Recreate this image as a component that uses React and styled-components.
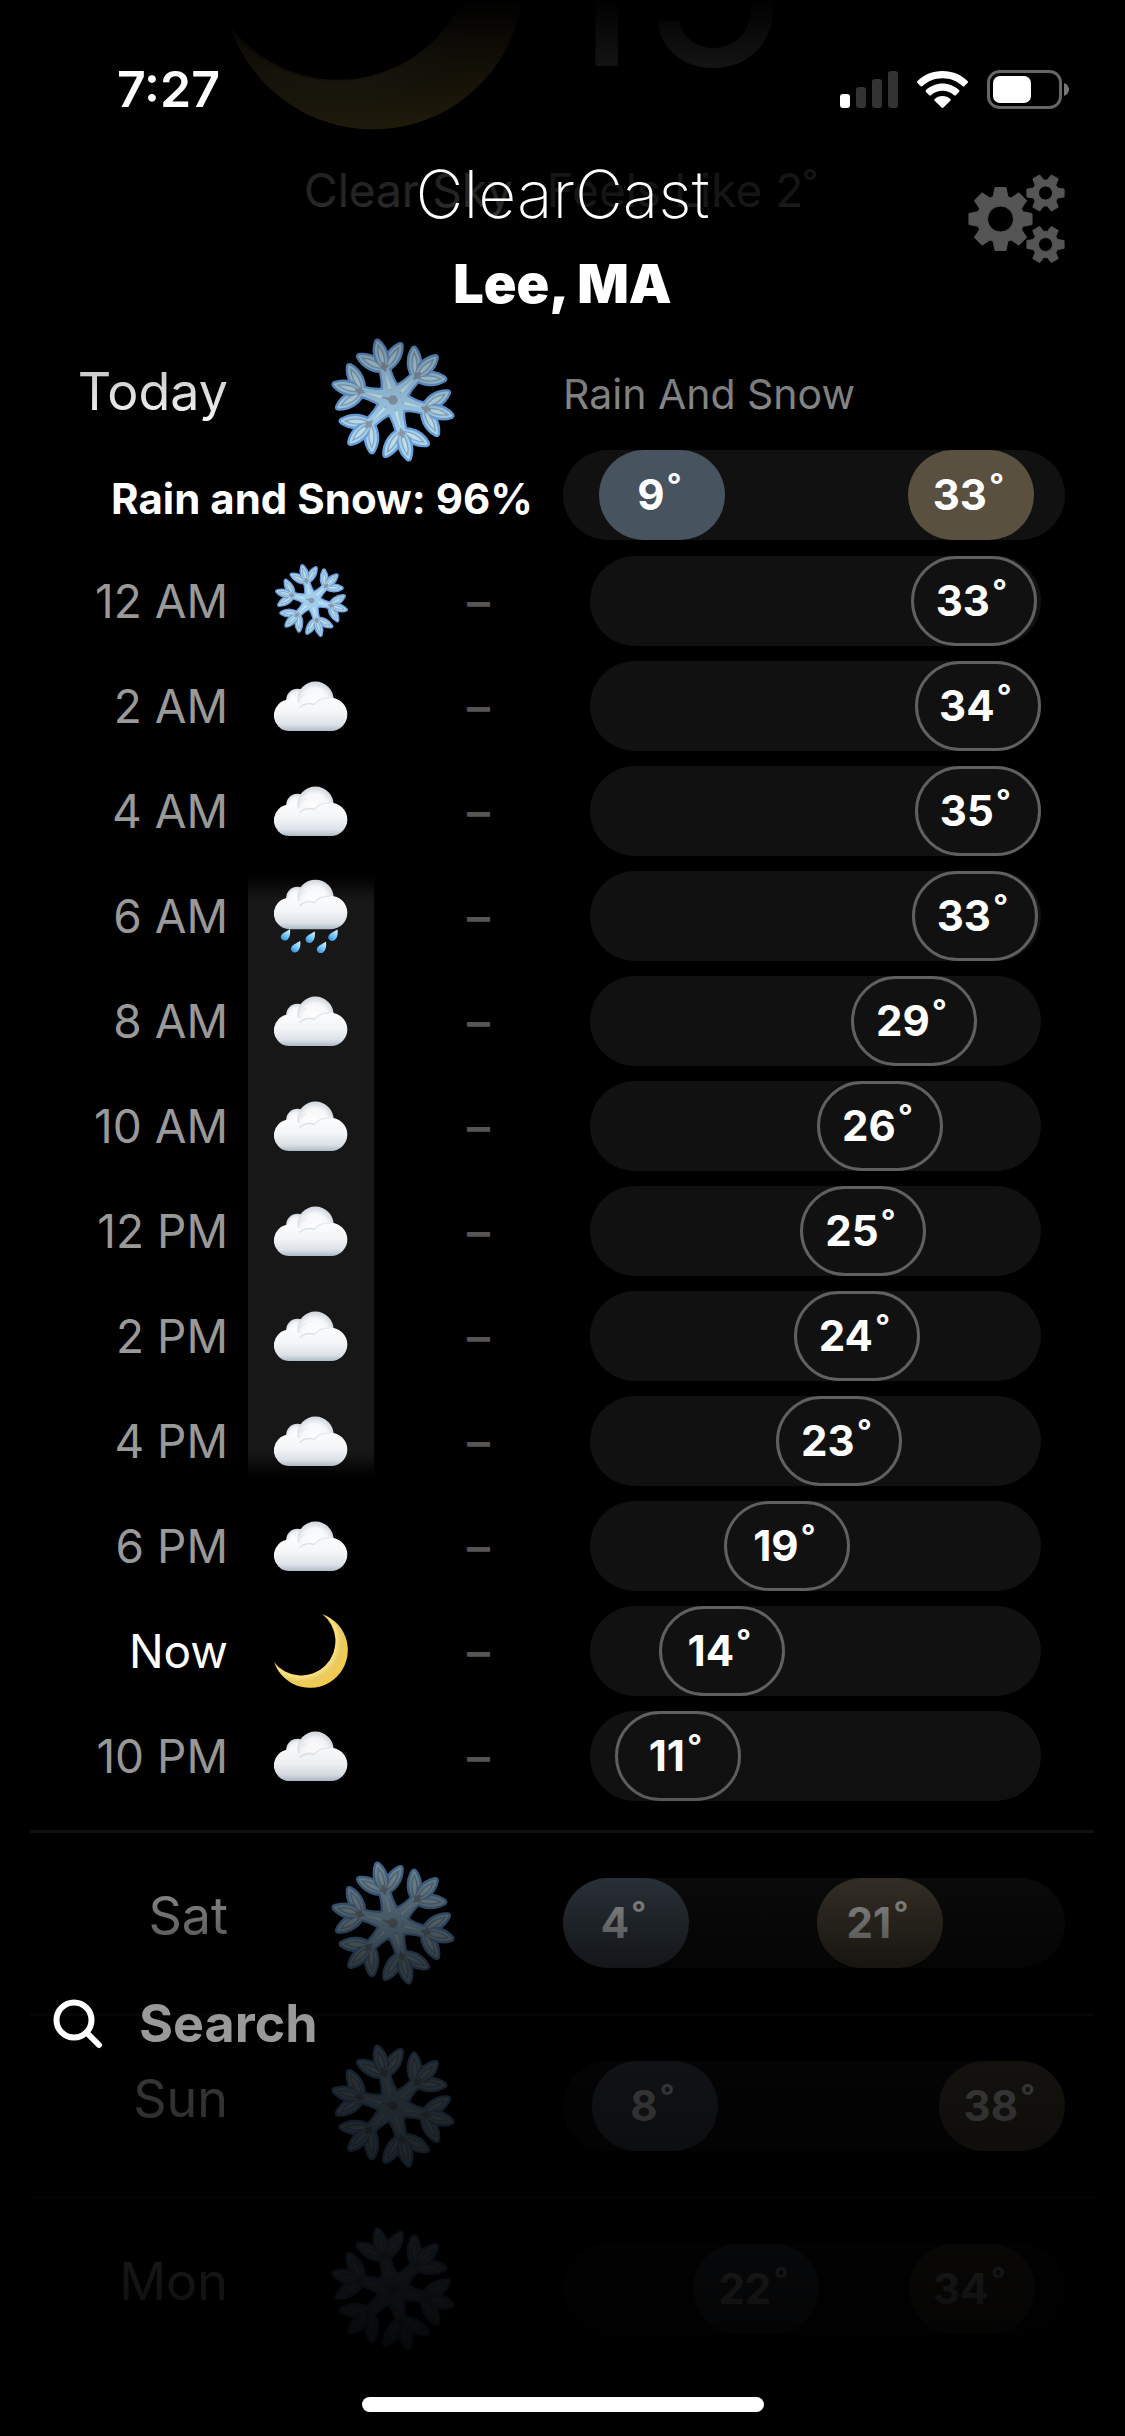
import React, { useId } from "react";
import styled, { createGlobalStyle } from "styled-components";

const GlobalStyle = createGlobalStyle`
  *, *::before, *::after { box-sizing: border-box; }
  body {
    margin: 0;
    background: #000;
    color: #fff;
    font-family: Inter, Roboto, "Liberation Sans", sans-serif;
  }
`;

const Screen = styled.main`
  position: relative;
  height: 100vh;
  overflow: hidden;
  background: #000;
`;

/* ---------- scrolled forecast ---------- */

const Forecast = styled.div`
  display: flex;
  flex-direction: column;
`;

const Hero = styled.section`
  display: flex;
  align-items: flex-end;
  justify-content: center;
  gap: 16px;
  height: 130px;
  padding-right: 75px;
  svg { flex: none; }
`;

const HeroTemp = styled.span`
  width: 280px;
  padding-bottom: 52px;
  font-size: 244px;
  font-weight: 400;
  line-height: 200px;
  white-space: nowrap;
`;

const HeroSummary = styled.p`
  display: flex;
  justify-content: center;
  gap: 34px;
  margin: 0;
  padding: 30px 4px 118px 0;
  font-size: 46px;
  line-height: 60px;
`;

const Secondary = styled.span`
  color: #999;
`;

const DayGrid = styled.div`
  display: grid;
  grid-template-columns: 228fr 335fr 502fr;
  grid-template-rows: ${(p) => (p.$expanded ? "112px 90px" : "180px")};
  align-items: ${(p) => (p.$expanded ? "start" : "center")};
  padding-right: 60px;
`;

const DayLabel = styled.h2`
  margin: 0;
  padding-bottom: ${(p) => (p.$expanded ? "0" : "14px")};
  font-size: 52px;
  font-weight: 400;
  line-height: ${(p) => (p.$expanded ? "108px" : "60px")};
  text-align: right;
`;

const IconCell = styled.div`
  display: flex;
  align-items: center;
  justify-content: center;
  height: 124px;
  padding-right: 6px;
  svg { flex: none; }
`;

const Condition = styled.p`
  margin: 0;
  font-size: 41px;
  line-height: 112px;
  color: #939393;
`;

const Chance = styled.p`
  grid-column: span 2;
  margin: 0;
  padding: 4px 30px 0 0;
  font-size: 42px;
  font-weight: 700;
  line-height: 90px;
  text-align: right;
  white-space: nowrap;
`;

const Track = styled.div`
  display: flex;
  height: 90px;
  border-radius: 45px;
  background: #111;
`;

const Spacer = styled.span`
  flex: ${(p) => p.$grow} 0 0;
`;

const pillLook = {
  low: "background: #47535f;",
  high: "background: #595040;",
  hour: "border: 3px solid #606060;",
};

const Pill = styled.span`
  flex: none;
  display: flex;
  align-items: center;
  justify-content: center;
  gap: 2px;
  width: 126px;
  height: 90px;
  padding: 0 5px 0 0;
  border-radius: 45px;
  font-size: 42px;
  font-weight: 700;
  line-height: 50px;
  ${(p) => pillLook[p.$kind]}
`;

const Degree = styled.span`
  padding-bottom: 4px;
`;

const HourList = styled.ul`
  list-style: none;
  margin: 8px 0 22px;
  padding: 0;
`;

const HourRow = styled.li`
  display: grid;
  grid-template-columns: 248fr 126fr 209fr 458fr;
  align-items: center;
  height: 105px;
  padding-right: 84px;
`;

const HourTime = styled.span`
  padding-right: 20px;
  font-size: 46px;
  line-height: 60px;
  text-align: right;
  white-space: nowrap;
  color: ${(p) => (p.$now ? "#fff" : "#999")};
`;

const daylight = {
  none: "none",
  start: "linear-gradient(transparent 13px, #171717 36px)",
  full: "#171717",
  end: "linear-gradient(#171717 65px, transparent 88px)",
};

const HourIcon = styled.span`
  display: flex;
  align-items: center;
  justify-content: center;
  height: 105px;
  background: ${(p) => daylight[p.$daylight]};
`;

const Precip = styled.span`
  font-size: 46px;
  line-height: 60px;
  font-weight: 600;
  text-align: center;
  color: #555;
`;

const HourTrack = styled.div`
  padding-left: 7px;
`;

const Divider = styled.hr`
  width: calc(100% - 61px);
  height: 3px;
  margin: 0 31px 0 30px;
  border: 0;
  background: #161616;
`;

/* ---------- bars over the forecast ---------- */

const TopBar = styled.header`
  position: absolute;
  inset: 0 0 auto 0;
  height: 430px;
  background: linear-gradient(
    rgba(0, 0, 0, 1) 0,
    rgba(0, 0, 0, 0.93) 60px,
    rgba(0, 0, 0, 0.88) 120px,
    rgba(0, 0, 0, 0.86) 200px,
    rgba(0, 0, 0, 0.5) 290px,
    rgba(0, 0, 0, 0.2) 373px,
    rgba(0, 0, 0, 0.07) 411px,
    rgba(0, 0, 0, 0) 430px
  );
`;

const StatusBar = styled.div`
  display: flex;
  align-items: center;
  justify-content: space-between;
  height: 154px;
  padding: 24px 56px 0 117px;
`;

const Clock = styled.time`
  font-size: 50px;
  font-weight: 600;
  line-height: 60px;
`;

const StatusIcons = styled.div`
  display: flex;
  align-items: center;
  gap: 19px;
`;

const TitleRow = styled.div`
  display: grid;
  grid-template-columns: 1fr auto 1fr;
  align-items: start;
`;

const Titles = styled.div`
  grid-column: 2;
  text-align: center;
`;

const AppName = styled.h1`
  margin: 0;
  font-size: 66px;
  font-weight: 200;
  line-height: 80px;
`;

const Place = styled.p`
  margin: 0;
  font-size: 54px;
  font-weight: 900;
  line-height: 100px;
`;

const SettingsButton = styled.button`
  justify-self: end;
  display: flex;
  margin: 20px 59px 0 0;
  padding: 0;
  border: 0;
  background: none;
  color: #555;
`;

const BottomBar = styled.footer`
  position: absolute;
  inset: auto 0 0 0;
  height: 716px;
  display: flex;
  flex-direction: column;
  justify-content: space-between;
  padding: 264px 0 24px;
  background: linear-gradient(
    rgba(0, 0, 0, 0) 0,
    rgba(0, 0, 0, 0.04) 70px,
    rgba(0, 0, 0, 0.43) 158px,
    rgba(0, 0, 0, 0.73) 245px,
    rgba(0, 0, 0, 0.78) 341px,
    rgba(0, 0, 0, 0.83) 430px,
    rgba(0, 0, 0, 0.9) 524px,
    rgba(0, 0, 0, 0.95) 610px,
    rgba(0, 0, 0, 1) 700px
  );
`;

const SearchForm = styled.form`
  display: flex;
  align-items: center;
  gap: 34px;
  height: 80px;
  padding: 0 52px;
`;

const SearchLabel = styled.label`
  display: flex;
`;

const SearchInput = styled.input`
  flex: 1;
  min-width: 0;
  height: 80px;
  padding: 0;
  border: 0;
  outline: 0;
  appearance: none;
  background: transparent;
  color: #fff;
  font: 700 52px/80px Inter, Roboto, "Liberation Sans", sans-serif;
  &::placeholder { color: #999; opacity: 1; }
`;

const HomeIndicator = styled.div`
  align-self: center;
  width: 402px;
  height: 15px;
  border-radius: 8px;
  background: #fff;
`;

/* ---------- drawings ---------- */

const LEAF = "M0 -86C-25 -112 -25 -152 -6 -181Q0 -188 6 -181C25 -152 25 -112 0 -86Z";
const VEIN = "M0 -100C-10 -122 -10 -146 0 -168C10 -146 10 -122 0 -100";

function Snowflake({ size }) {
  const id = useId();
  const arms = [-15, 45, 105, 165, 225, 285];
  return (
    <svg width={size} height={size} viewBox="-192 -192 384 384" role="img" aria-label="Snow">
      <defs>
        <linearGradient id={id} gradientUnits="userSpaceOnUse" x1="0" y1="-188" x2="0" y2="0">
          <stop offset="0" stopColor="#add9ee" />
          <stop offset="0.5" stopColor="#9fc9ea" />
          <stop offset="1" stopColor="#add6ea" />
        </linearGradient>
      </defs>
      {arms.map((a) => (
        <g key={a} transform={`rotate(${a})`} fill={`url(#${id})`} stroke="#6a9fdc" strokeWidth="7" strokeLinejoin="round">
          <path d="M-36 0L-27 -34Q-14 -56 -16 -108L16 -108Q14 -56 27 -34L36 0Z" />
          {[-47, 47, 0].map((r) => (
            <path key={r} d={LEAF} transform={`rotate(${r} 0 -92)`} />
          ))}
        </g>
      ))}
      {arms.map((a) => (
        <g key={a} transform={`rotate(${a})`}>
          <path d="M-28 2L-22 -32Q-11 -56 -13 -112L13 -112Q11 -56 22 -32L28 2Z" fill="#a2cdec" />
          <path d="M-4 -34L0 -92L4 -34Z" fill="#cdeef4" />
          {[-47, 0, 47].map((r) => (
            <path key={r} d={VEIN} transform={`rotate(${r} 0 -92)`} fill="#b6e0f2" stroke="#8fa4ba" strokeWidth="4" />
          ))}
          <path d="M0 -118L10 -102L0 -84L-10 -102Z" fill="#8798a8" />
          <path d="M-6 0L0 -38L6 0Z" fill="#8c9aa8" />
        </g>
      ))}
      <circle r="14" fill="#8c9aa8" />
    </svg>
  );
}

function CloudShape({ id }) {
  return (
    <>
      <defs>
        <linearGradient id={`${id}b`} gradientUnits="userSpaceOnUse" x1="0" y1="40" x2="0" y2="147">
          <stop offset="0" stopColor="#fcfdfd" />
          <stop offset="0.5" stopColor="#f3f5f7" />
          <stop offset="0.82" stopColor="#dce1e7" />
          <stop offset="1" stopColor="#aab7c4" />
        </linearGradient>
        <radialGradient id={`${id}t`} cx="0.48" cy="0.55" r="0.52">
          <stop offset="0" stopColor="#ffffff" />
          <stop offset="0.7" stopColor="#f6f7f9" />
          <stop offset="1" stopColor="#d3dae1" />
        </radialGradient>
      </defs>
      <circle cx="69" cy="54" r="33" fill={`url(#${id}t)`} />
      <circle cx="122" cy="54" r="54" fill={`url(#${id}t)`} />
      <path
        d="M46 53C58 53 66 57 74 65C88 60 108 60 122 64C134 50 150 47 166 48A49 49 0 0 1 168 146H46A46 46 0 0 1 46 53Z"
        fill={`url(#${id}b)`}
      />
      <path d="M76 76C88 64 106 62 118 68" fill="none" stroke="#dce1e7" strokeWidth="4" strokeLinecap="round" />
      <path d="M119 66C130 53 146 48 164 49" fill="none" stroke="#e2e7ec" strokeWidth="4" strokeLinecap="round" />
      <path d="M76 50C80 42 86 38 93 36" fill="none" stroke="#e6eaee" strokeWidth="4" strokeLinecap="round" />
    </>
  );
}

function Cloud() {
  const id = useId();
  return (
    <svg width="74" height="74" viewBox="0 -37 218 218" role="img" aria-label="Cloudy">
      <CloudShape id={id} />
    </svg>
  );
}

const DROPS = [[20, 145], [50, 180], [93, 152], [160, 146], [126, 182]];

function RainCloud() {
  const id = useId();
  return (
    <svg width="74" height="74" viewBox="0 -2 218 218" role="img" aria-label="Rain">
      <CloudShape id={id} />
      <defs>
        <linearGradient id={`${id}d`} x1="0.8" y1="0" x2="0.2" y2="1">
          <stop offset="0" stopColor="#d9f3ff" />
          <stop offset="0.5" stopColor="#7cc8f6" />
          <stop offset="1" stopColor="#2f8fe0" />
        </linearGradient>
      </defs>
      {DROPS.map(([x, y]) => (
        <path
          key={x}
          transform={`translate(${x} ${y})`}
          d="M27 0C29 12 27 24 20 31C12 38 1 34 0 24C0 12 18 8 27 0Z"
          fill={`url(#${id}d)`}
        />
      ))}
    </svg>
  );
}

function Moon({ size }) {
  const id = useId();
  return (
    <svg width={size} height={size} viewBox="0 0 217 217" role="img" aria-label="Clear night">
      <defs>
        <radialGradient id={id} gradientUnits="userSpaceOnUse" cx="78" cy="78" r="142">
          <stop offset="0.7" stopColor="#a86f14" />
          <stop offset="0.73" stopColor="#fbe283" />
          <stop offset="0.85" stopColor="#e9ca62" />
          <stop offset="1" stopColor="#f3cb4c" />
        </radialGradient>
      </defs>
      <path d="M140 0A111 111 0 1 1 0 140A100 100 0 1 0 140 0Z" fill={`url(#${id})`} />
    </svg>
  );
}

function gearPath(cx, cy, teeth, outer, root, hole, spread) {
  const step = (Math.PI * 2) / teeth;
  const at = (r, a) => `${(cx + r * Math.cos(a)).toFixed(2)} ${(cy + r * Math.sin(a)).toFixed(2)}`;
  const start = teeth === 8 ? -Math.PI / 2 : 0;
  const points = [];
  for (let i = 0; i < teeth; i += 1) {
    const a = start + i * step;
    points.push(at(root, a - spread * 1.45), at(outer, a - spread * 0.78), at(outer, a + spread * 0.78), at(root, a + spread * 1.45));
  }
  return `M${points.join("L")}ZM${cx - hole} ${cy}a${hole} ${hole} 0 1 0 ${hole * 2} 0a${hole} ${hole} 0 1 0 ${-hole * 2} 0Z`;
}

function Gears() {
  return (
    <svg width="98" height="90" viewBox="0 0 98 90" aria-hidden="true" fill="currentColor" stroke="currentColor" strokeWidth="1" strokeLinejoin="round" fillRule="evenodd">
      <path d={gearPath(32.5, 45, 8, 32, 23.5, 13, 0.22)} />
      <path d={gearPath(77.5, 19, 6, 19, 13, 7, 0.27)} />
      <path d={gearPath(77.5, 70.5, 6, 19, 13, 7, 0.27)} />
    </svg>
  );
}

function Signal() {
  return (
    <svg width="58" height="37" viewBox="0 0 58 37" role="img" aria-label="Signal">
      <rect x="0" y="23" width="10" height="14" rx="3" fill="#fff" />
      <rect x="16" y="16" width="10" height="21" rx="3" fill="#333" />
      <rect x="32" y="8" width="10" height="29" rx="3" fill="#333" />
      <rect x="48" y="0" width="10" height="37" rx="3" fill="#333" />
    </svg>
  );
}

function Wifi() {
  return (
    <svg width="51" height="37" viewBox="0 0 51 37" role="img" aria-label="Wi-Fi" fill="#fff">
      <path d="M25.500 0C35.500 0 44 3.600 50.500 10Q51.500 11 50.500 12L47.500 15Q46.500 16 45.500 15C40 10 33 7.300 25.500 7.300S11 10 5.500 15Q4.500 16 3.500 15L.5 12Q-.5 11 .5 10C7 3.600 15.500 0 25.500 0Z" />
      <path d="M25.500 12.500C31.500 12.500 37.500 15 42 19Q43 20 42 21L38.800 24.200Q38 25 37 24.200C34 21.500 30 19.800 25.500 19.800S17 21.500 14 24.200Q13 25 12.200 24.200L9 21Q8 20 9 19C13.500 15 19.500 12.500 25.500 12.500Z" />
      <path d="M25.500 25C28.500 25 31.300 26 33.300 27.900Q34.200 28.900 33.300 29.800L26.500 36.500Q25.500 37.400 24.500 36.500L17.700 29.800Q16.800 28.900 17.700 27.900C19.700 26 22.500 25 25.500 25Z" />
    </svg>
  );
}

function Battery() {
  return (
    <svg width="82" height="39" viewBox="0 0 82 39" role="img" aria-label="Battery">
      <rect x="1.500" y="1.500" width="72" height="36" rx="11" fill="none" stroke="#666" strokeWidth="3" />
      <rect x="6" y="6" width="38" height="27" rx="7" fill="#fff" />
      <path d="M77 13C80.500 14.500 82 17 82 19.500S80.500 24.500 77 26Z" fill="#777" />
    </svg>
  );
}

function Magnifier() {
  return (
    <svg width="53" height="50" viewBox="0 0 53 50" aria-hidden="true" fill="none" stroke="#fff" strokeLinecap="round">
      <circle cx="22" cy="21" r="17.500" strokeWidth="6" />
      <path d="M35 34L47 46" strokeWidth="6" />
    </svg>
  );
}

/* ---------- data ---------- */

const TRACK_SPAN = 376;
const HOUR_SPAN = 325;

const today = { low: 9, high: 33, lowAt: 36, highAt: 345 };

const hours = [
  { time: "12 AM", icon: "snow", temp: 33, at: 321 },
  { time: "2 AM", icon: "cloud", temp: 34, at: 325 },
  { time: "4 AM", icon: "cloud", temp: 35, at: 325 },
  { time: "6 AM", icon: "rain", temp: 33, at: 322, daylight: "start" },
  { time: "8 AM", icon: "cloud", temp: 29, at: 261, daylight: "full" },
  { time: "10 AM", icon: "cloud", temp: 26, at: 227, daylight: "full" },
  { time: "12 PM", icon: "cloud", temp: 25, at: 210, daylight: "full" },
  { time: "2 PM", icon: "cloud", temp: 24, at: 204, daylight: "full" },
  { time: "4 PM", icon: "cloud", temp: 23, at: 186, daylight: "end" },
  { time: "6 PM", icon: "cloud", temp: 19, at: 134 },
  { time: "Now", icon: "moon", temp: 14, at: 69 },
  { time: "10 PM", icon: "cloud", temp: 11, at: 25 },
];

const days = [
  { name: "Sat", low: 4, high: 21, lowAt: 0, highAt: 254 },
  { name: "Sun", low: 8, high: 38, lowAt: 29, highAt: 376 },
  { name: "Mon", low: 22, high: 34, lowAt: 130, highAt: 346 },
];

function WeatherIcon({ kind }) {
  if (kind === "snow") return <Snowflake size={77} />;
  if (kind === "rain") return <RainCloud />;
  if (kind === "moon") return <Moon size={74} />;
  return <Cloud />;
}

function Temp({ kind, value }) {
  return (
    <Pill $kind={kind}>
      {value}
      <Degree>˚</Degree>
    </Pill>
  );
}

function RangeTrack({ low, high, lowAt, highAt }) {
  return (
    <Track>
      <Spacer $grow={lowAt} />
      <Temp kind="low" value={low} />
      <Spacer $grow={highAt - lowAt - 126} />
      <Temp kind="high" value={high} />
      <Spacer $grow={TRACK_SPAN - highAt} />
    </Track>
  );
}

export default function App() {
  return (
    <Screen>
      <GlobalStyle />
      <Forecast>
        <Hero>
          <Moon size={294} />
          <HeroTemp>15</HeroTemp>
        </Hero>
        <HeroSummary>
          <span>Clear Sky</span>
          <Secondary>Feels Like 2˚</Secondary>
        </HeroSummary>

        <DayGrid $expanded>
          <DayLabel $expanded>Today</DayLabel>
          <IconCell>
            <Snowflake size={130} />
          </IconCell>
          <Condition>Rain And Snow</Condition>
          <Chance>Rain and Snow: 96%</Chance>
          <RangeTrack {...today} />
        </DayGrid>

        <HourList>
          {hours.map((h) => (
            <HourRow key={h.time}>
              <HourTime $now={h.time === "Now"}>{h.time}</HourTime>
              <HourIcon $daylight={h.daylight || "none"}>
                <WeatherIcon kind={h.icon} />
              </HourIcon>
              <Precip>–</Precip>
              <HourTrack>
                <Track>
                  <Spacer $grow={h.at} />
                  <Temp kind="hour" value={h.temp} />
                  <Spacer $grow={HOUR_SPAN - h.at} />
                </Track>
              </HourTrack>
            </HourRow>
          ))}
        </HourList>

        {days.map((d) => (
          <section key={d.name}>
            <Divider />
            <DayGrid>
              <DayLabel>{d.name}</DayLabel>
              <IconCell>
                <Snowflake size={130} />
              </IconCell>
              <RangeTrack {...d} />
            </DayGrid>
          </section>
        ))}
      </Forecast>

      <TopBar>
        <StatusBar>
          <Clock>7:27</Clock>
          <StatusIcons>
            <Signal />
            <Wifi />
            <Battery />
          </StatusIcons>
        </StatusBar>
        <TitleRow>
          <Titles>
            <AppName>ClearCast</AppName>
            <Place>Lee, MA</Place>
          </Titles>
          <SettingsButton type="button" aria-label="Settings">
            <Gears />
          </SettingsButton>
        </TitleRow>
      </TopBar>

      <BottomBar>
        <SearchForm role="search">
          <SearchLabel htmlFor="place-search" aria-label="Search">
            <Magnifier />
          </SearchLabel>
          <SearchInput id="place-search" type="search" placeholder="Search" />
        </SearchForm>
        <HomeIndicator />
      </BottomBar>
    </Screen>
  );
}
